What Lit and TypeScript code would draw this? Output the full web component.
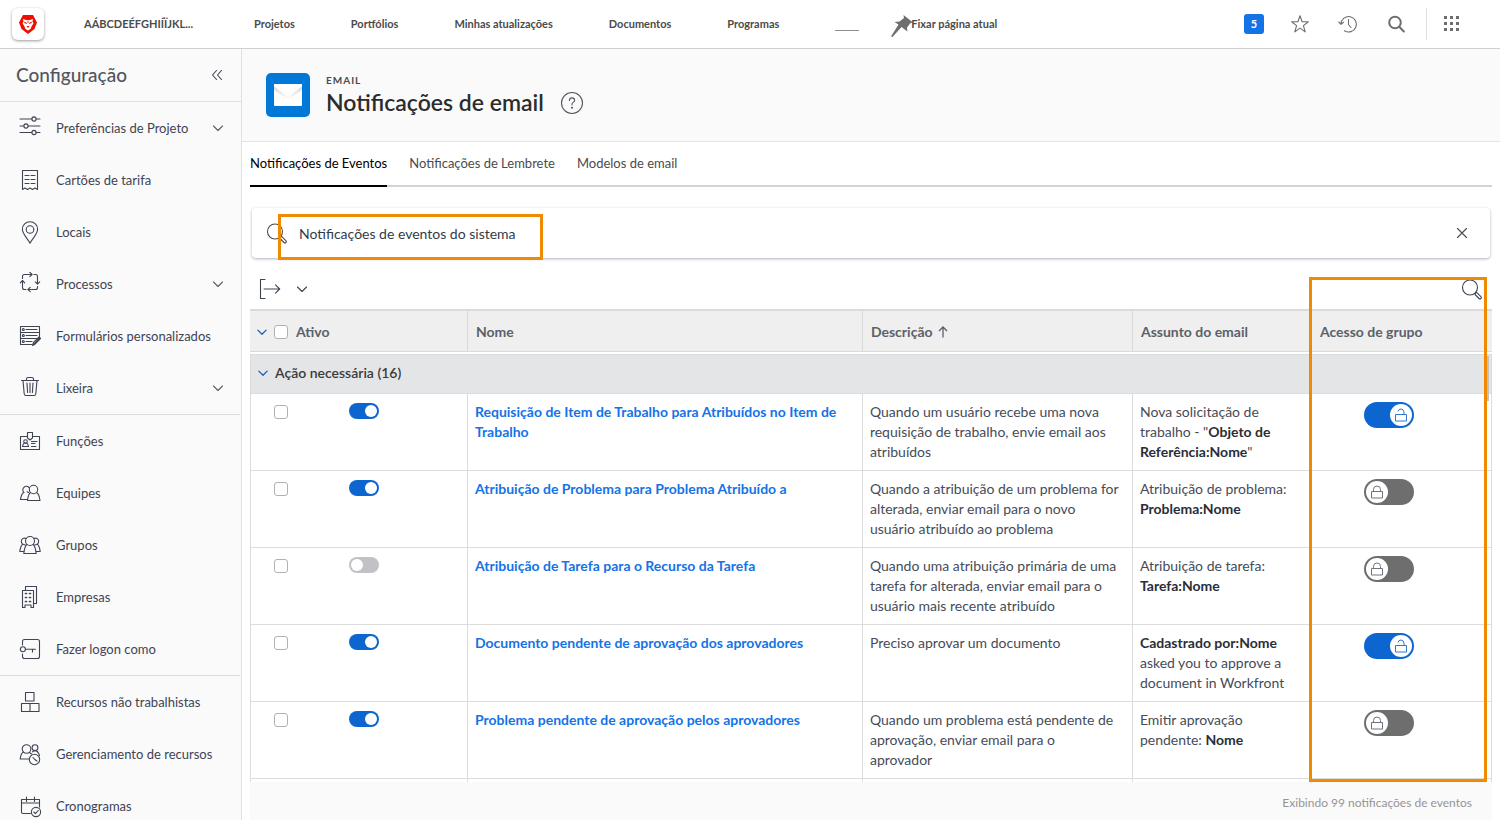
import { LitElement, html, svg, css, nothing } from "lit";
import type { TemplateResult } from "lit";
import { customElement, state } from "lit/decorators.js";
import { classMap } from "lit/directives/class-map.js";

/* Line icons, drawn on a 24 unit square. */
const glyphs: Record<string, TemplateResult> = {
  sliders: svg`<path d="M2 3h11.8M18.2 3H22M2 10h3.8M10.2 10H22M2 16.5h11.8M18.2 16.5H22"/>
    <circle cx="16" cy="3" r="2.1"/><circle cx="8" cy="10" r="2.1"/><circle cx="16" cy="16.5" r="2.1"/>`,
  receipt: svg`<path d="M4.5 21.5v-19h15v19l-2.5-1.5-2.5 1.5-2.5-1.5-2.5 1.5L7 20zM7 7.5h4M13 7.5h4M7 11.5h4M13 11.5h4M7 15.5h4M13 15.5h4"/>`,
  pin: svg`<path d="M12 23.2C9.5 18.5 4.4 14 4.4 9.3a7.6 7.6 0 0 1 15.2 0C19.6 14 14.5 18.5 12 23.2z"/><circle cx="12" cy="9.5" r="3.8"/>`,
  cycle: svg`<path d="M4.5 6.5v-2q0-2 2-2h7.5M11.8.3l2.3 2.2-2.3 2.2M16 2.500h1.500q2 0 2 2v7.500M17.300 9.800l2.200 2.300 2.200-2.300M19.500 14.500v1q0 2-2 2H10M12.200 15.300l-2.300 2.200 2.300 2.200M8 17.500H6.500q-2 0-2-2V8.500M2.300 10.800l2.200-2.300 2.200 2.300"/>`,
  form: svg`<path d="M14 20.5H2.500v-18h19v12M2.500 8.500h19M2.500 14.500h16M8 5.500h11M8 11.500h11M8 17.500h6"/>
    <circle cx="5.300" cy="5.500" r="1"/><circle cx="5.300" cy="11.500" r="1"/><circle cx="5.300" cy="17.500" r="1"/>
    <path d="M14.500 21.500l1-3 5.500-5.500 1.500 1.500-5.500 5.700zM16 20l5.500-6"/>`,
  trash: svg`<path d="M3.500 4.500h17M8.500 4.500v-1.500q0-1.500 1.500-1.500h4q1.500 0 1.500 1.500v1.500M5 4.500l1.200 13.300q.200 1.700 1.700 1.700h8.200q1.500 0 1.700-1.700L19 4.500M9 7l.600 9.500M12 7v9.500M15 7l-.600 9.500"/>`,
  badge: svg`<path d="M9.500 7.500h-7v13h19v-13h-7M9.500 3.500h5v5.500l-2.500 2-2.500-2zM13.500 12.500h5.500M13.500 14.500h3.500M13.500 17.500h4.500"/>
    <circle cx="7.500" cy="12.500" r="1.800"/><path d="M4.500 17.500q.500-3 2-3.500h2q1.500.500 2 3.500z"/>`,
  team: svg`<circle cx="15.500" cy="8.500" r="4.200"/><path d="M12.500 11.500c-1.500 1-2.500 4-3 8h12.500c-.500-4-1.500-7-3.500-8M9.700 18.500H2.500c.500-3.500 1.300-6 3.300-7"/>
    <path d="M10.500 11.500q-1-.500-1.500-.700M5.800 11.500A3.200 3.200 0 1 1 11 6.500"/>`,
  group: svg`<circle cx="12" cy="8" r="4.500"/><path d="M9 11.500c-1.500 1-2.800 5-3.200 9h12.400c-.400-4-1.700-8-3.200-9M6.300 18.500H1.800c.500-3.500 1.200-6.200 3-7.200M17.700 18.500h4.500c-.500-3.500-1.200-6.200-3-7.200"/>
    <path d="M8.200 5.500A3.300 3.300 0 1 0 5.500 11.500l2 .500M15.800 5.500a3.300 3.300 0 1 1 2.700 6l-2 .500"/>`,
  building: svg`<path d="M4.500 22.500v-17h11v17h-2.500v-2.500H7v2.500zM7.500 5.300V1.500h11v17h-3"/>
    <path d="M7.500 8.500h1M11.500 8.500h1M7.500 12.500h1M11.500 12.500h1M7.500 16.500h1M11.500 16.500h1" stroke-width="1.700"/>`,
  key: svg`<path d="M4.500 8V4.500q0-2 2-2h13q2 0 2 2v15q0 2-2 2h-13q-2 0-2-2V17M7.500 12.300h10M14.500 12.500v2.500"/><circle cx="4.900" cy="12.300" r="2.500"/>`,
  blocks: svg`<path d="M7.500 2.500h8.500v8.500H7.500zM3.500 13.500h17.500v8H3.500zM12 13.500v8"/>`,
  teamClock: svg`<circle cx="8.500" cy="7" r="4.300"/><path d="M5.500 10c-2 1-3 4-3.300 7h9M11.500 10.500l2 1.500"/>
    <circle cx="17" cy="5.700" r="2.900"/><path d="M14.500 9.800q1-1.200 2.500-1.200 3 0 4.500 5"/>
    <circle cx="16.500" cy="17.500" r="5.200"/><path d="M15 15.500l1.800 2 2.200 1.500"/>`,
  calendar: svg`<path d="M12.500 19.500H5q-1.500 0-1.500-1.500V5.500h18V13M3.500 9h18M8.500 3v4.500M16.500 3v4.500"/>
    <circle cx="18" cy="18" r="4.600"/><path d="M15.800 18l1.600 1.700 2.900-3.200"/>`,
  chevron: svg`<path d="M7.500 10l4.500 4.500 4.500-4.500"/>`,
  collapse: svg`<path d="M11.500 7.500L7.500 12l4 4.500M16.500 7.500L12.500 12l4 4.500"/>`,
  cross: svg`<path d="M7.500 7.500l9 9M16.500 7.500l-9 9"/>`,
  lens: svg`<circle cx="11" cy="10.500" r="7.500"/><path d="M16.400 15.800l1.400-.200 4.100 4a1.200 1.200 0 0 1-1.900 1.900l-4-4z"/>`,
  exportTo: svg`<path d="M7 2.500H2.500v19H7M6 12h15.500M17.500 7.800l4.200 4.200-4.200 4.200"/>`,
  help: svg`<circle cx="12" cy="12" r="10.500"/><path d="M9.400 9.500q.100-2.600 2.600-2.600t2.600 2.300q0 1.300-1.400 2.200T12 13.900"/><circle cx="12" cy="16.700" r=".500"/>`,
  star: svg`<path d="M12 3.800l2.100 5.900h6.200l-4.900 3.900 1.800 6.300L12 16.100 6.800 19.900l1.800-6.300-4.900-3.900h6.200z"/>`,
  history: svg`<path d="M5 12A7.700 7.700 0 1 1 8.500 18.700M2.800 10L5 12.300l2.500-2M12.500 7.500v5l2.500 3"/>`,
  search: svg`<g stroke-width="2"><circle cx="11" cy="10.500" r="5.800"/><path d="M15.300 14.800l4.500 4.700"/></g>`,
};

const icon = (name: string, extra = "") =>
  html`<svg class="icon ${extra}" viewBox="0 0 24 24" aria-hidden="true">${glyphs[name]}</svg>`;

const lock = (open: boolean) => html`
  <svg class="lock" viewBox="0 0 14 14" aria-hidden="true">
    <path d="M1.500 6.500h11v6.500h-11z" />
    <path d=${open ? "M4 3.500Q4.500 1 7 1t3 3v2.500" : "M3.500 6.500V4.500Q3.500 1 7 1t3.500 3.500v2"} />
  </svg>`;

interface MenuItem { label: string; glyph: string; opens?: boolean }

const menu: MenuItem[][] = [
  [
    { label: "Preferências de Projeto", glyph: "sliders", opens: true },
    { label: "Cartões de tarifa", glyph: "receipt" },
    { label: "Locais", glyph: "pin" },
    { label: "Processos", glyph: "cycle", opens: true },
    { label: "Formulários personalizados", glyph: "form" },
    { label: "Lixeira", glyph: "trash", opens: true },
  ],
  [
    { label: "Funções", glyph: "badge" },
    { label: "Equipes", glyph: "team" },
    { label: "Grupos", glyph: "group" },
    { label: "Empresas", glyph: "building" },
    { label: "Fazer logon como", glyph: "key" },
  ],
  [
    { label: "Recursos não trabalhistas", glyph: "blocks" },
    { label: "Gerenciamento de recursos", glyph: "teamClock" },
    { label: "Cronogramas", glyph: "calendar" },
  ],
];

interface EventRow {
  name: string;
  about: string;
  subject: TemplateResult;
  active: boolean;
  unlocked: boolean;
}

const events: EventRow[] = [
  {
    name: "Requisição de Item de Trabalho para Atribuídos no Item de Trabalho",
    about: "Quando um usuário recebe uma nova requisição de trabalho, envie email aos atribuídos",
    subject: html`Nova solicitação de trabalho - "<b>Objeto de Referência:Nome</b>"`,
    active: true,
    unlocked: true,
  },
  {
    name: "Atribuição de Problema para Problema Atribuído a",
    about: "Quando a atribuição de um problema for alterada, enviar email para o novo usuário atribuído ao problema",
    subject: html`Atribuição de problema: <b>Problema:Nome</b>`,
    active: true,
    unlocked: false,
  },
  {
    name: "Atribuição de Tarefa para o Recurso da Tarefa",
    about: "Quando uma atribuição primária de uma tarefa for alterada, enviar email para o usuário mais recente atribuído",
    subject: html`Atribuição de tarefa: <b>Tarefa:Nome</b>`,
    active: false,
    unlocked: false,
  },
  {
    name: "Documento pendente de aprovação dos aprovadores",
    about: "Preciso aprovar um documento",
    subject: html`<b>Cadastrado por:Nome</b> asked you to approve a document in Workfront`,
    active: true,
    unlocked: true,
  },
  {
    name: "Problema pendente de aprovação pelos aprovadores",
    about: "Quando um problema está pendente de aprovação, enviar email para o aprovador",
    subject: html`Emitir aprovação pendente: <b>Nome</b>`,
    active: true,
    unlocked: false,
  },
];

@customElement("app-root")
export class AppRoot extends LitElement {
  @state() private tab = 0;

  static styles = css`
    :host {
      display: flex;
      flex-direction: column;
      height: 100vh;
      overflow: hidden;
      background: #fff;
      color: #4b4b4b;
      font-family: Lato, "Open Sans", sans-serif;
      font-size: 14px;
      line-height: 20px;
    }
    * { box-sizing: border-box; }
    a { color: inherit; text-decoration: none; }
    h1, h2 { margin: 0; }
    button {
      display: inline-flex;
      align-items: center;
      justify-content: center;
      flex: none;
      padding: 0;
      border: 0;
      background: none;
      color: inherit;
      font: inherit;
      cursor: pointer;
    }
    .icon {
      display: block;
      flex: none;
      width: 24px;
      height: 24px;
      fill: none;
      stroke: currentColor;
      stroke-width: 1.1;
      stroke-linecap: round;
      stroke-linejoin: round;
    }

    .topbar {
      display: flex;
      align-items: center;
      flex: none;
      height: 49px;
      padding: 0 36px 0 12px;
      border-bottom: 1px solid #d0d0d0;
    }
    .logo {
      display: grid;
      place-items: center;
      width: 32px;
      height: 32px;
      margin-right: 40px;
      border-radius: 6px;
      background: #fff;
      box-shadow: 0 1px 3px rgba(0, 0, 0, 0.4);
    }
    .logo svg { width: 18px; height: 20px; }
    .links {
      display: flex;
      align-items: center;
      gap: 56px;
      font-size: 11px;
      font-weight: 700;
      white-space: nowrap;
    }
    .workspace { width: 114px; }
    .rule { width: 24px; height: 1px; margin-top: 12px; background: #8e8e8e; }
    .fix {
      margin-left: 32px;
      font-size: 11px;
      font-weight: 700;
      white-space: nowrap;
    }
    .fix svg { width: 22px; height: 22px; margin: 4px -2px 0 0; }
    .tools {
      display: flex;
      align-items: center;
      gap: 24px;
      margin-left: auto;
      color: #6e6e6e;
    }
    .count {
      width: 20px;
      height: 20px;
      border-radius: 3px;
      background: #1473e6;
      color: #fff;
      font-size: 11px;
      font-weight: 700;
    }
    .apps {
      height: 32px;
      margin-left: -6px;
      padding-left: 13px;
      border-left: 1px solid #e1e1e1;
    }
    .apps svg { width: 24px; height: 24px; fill: #6e6e6e; }

    .body { display: flex; flex: 1; min-height: 0; }
    .sidebar {
      flex: none;
      width: 242px;
      overflow: hidden;
      border-right: 1px solid #e1e1e1;
      background: #fafafa;
      color: #3f4453;
    }
    .sidebar header {
      display: flex;
      align-items: center;
      justify-content: space-between;
      height: 53px;
      padding: 0 12px 0 16px;
      border-bottom: 1px solid #e1e1e1;
    }
    .sidebar h2 {
      color: #53565f;
      font-size: 19px;
      font-weight: 500;
      line-height: 24px;
    }
    .menu {
      margin: 0 1px 0 0;
      padding: 0;
      list-style: none;
      font-size: 13px;
    }
    .menu + .menu { border-top: 1px solid #dcdcdc; }
    .menu a {
      display: flex;
      align-items: center;
      gap: 14px;
      height: 52px;
      padding: 0 10px 0 18px;
      white-space: nowrap;
    }
    .menu .more { margin-left: auto; color: #5b616b; }

    main { display: flex; flex-direction: column; flex: 1; min-width: 0; }
    .title {
      display: flex;
      align-items: center;
      gap: 16px;
      flex: none;
      height: 93px;
      padding: 0 24px;
      border-bottom: 1px solid #e4e4e4;
      background: #fafafa;
    }
    .mail { width: 44px; height: 44px; }
    .kicker {
      font-size: 10px;
      font-weight: 700;
      line-height: 14px;
      letter-spacing: 1px;
    }
    .title h1 {
      color: #2c2c2c;
      font-size: 23px;
      font-weight: 600;
      line-height: 30px;
    }
    .title button { align-self: flex-end; margin-bottom: 26px; color: #53565f; }

    .content {
      display: flex;
      flex-direction: column;
      flex: 1;
      min-height: 0;
      padding: 0 8px;
    }
    .tabs {
      display: flex;
      gap: 22px;
      flex: none;
      height: 45px;
      box-shadow: inset 0 -2px #d3d3d3;
      font-size: 13px;
    }
    .tabs button { padding-bottom: 2px; border-bottom: 2px solid transparent; }
    .tabs .current { border-color: #000; color: #000; }

    .finder {
      position: relative;
      display: flex;
      align-items: center;
      gap: 8px;
      flex: none;
      height: 50px;
      margin: 21px 2px 0;
      padding: 0 16px 0 12px;
      border-radius: 4px;
      box-shadow: 0 1px 3px rgba(50, 60, 90, 0.4);
      color: #4b4b4b;
    }
    .finder input {
      flex: 1;
      min-width: 0;
      padding: 2px 0 0 3px;
      border: 0;
      outline: 0;
      background: none;
      color: #323c48;
      font: inherit;
    }
    .mark {
      position: absolute;
      border: 3px solid #ef8b00;
      pointer-events: none;
    }
    .mark.search { top: 6px; left: 26px; width: 265px; height: 46px; }
    .mark.access { top: 19px; right: 5px; bottom: 0; width: 178px; }

    .results {
      position: relative;
      display: flex;
      flex-direction: column;
      flex: 1;
      min-height: 0;
    }
    .toolbar {
      display: flex;
      align-items: center;
      gap: 8px;
      flex: none;
      height: 51px;
      padding: 10px 9px 0 8px;
      color: #3f4453;
    }
    .toolbar .right { margin-left: auto; }
    .scroller { position: relative; flex: 1; min-height: 0; overflow: hidden; }
    .thumb {
      position: absolute;
      top: 47px;
      right: 3px;
      width: 2px;
      height: 45px;
      background: #c1c1c1;
    }

    table {
      width: 100%;
      border-spacing: 0;
      table-layout: fixed;
      color: #464b58;
    }
    .c1 { width: 17.47%; }
    .c2 { width: 31.8%; }
    .c3 { width: 21.74%; }
    .c4 { width: 14.41%; }
    th { text-align: left; font-weight: 700; }
    thead th {
      height: 43px;
      padding: 1px 8px 0;
      border-top: 2px solid #dadada;
      border-bottom: 1px solid #dadada;
      border-left: 1px solid #dadada;
      background: #efefef;
      color: #5b616b;
    }
    thead th:first-child { padding-left: 0; border-left: 0; }
    .order { width: 10px; height: 12px; margin: 0 0 -1px 2px; fill: none; stroke: currentColor; stroke-width: 1.3; }
    .pick { display: flex; align-items: center; gap: 8px; }
    .pick button { width: 24px; margin-right: -8px; color: #1b5fb4; }
    .pick button .icon { width: 22px; height: 22px; stroke-width: 1.4; }
    .spacer td { height: 2px; padding: 0; }
    .section th {
      height: 40px;
      padding: 0 0 3px;
      border: 1px solid #dcdcdc;
      background: #e4e5e7;
      color: #3a3a3a;
      font-weight: 600;
    }
    td {
      height: 77px;
      padding: 8px 12px 8px 7px;
      border-bottom: 1px solid #dcdcdc;
      border-left: 1px solid #dcdcdc;
      vertical-align: top;
    }
    .spacer td { border: 0; }
    .event td:last-child { padding-left: 52px; border-right: 1px solid #dcdcdc; }
    .event td:first-child { padding-left: 23px; }
    td a { color: #1473e6; font-weight: 700; }
    td b { color: #2a2e38; }
    .state { display: flex; align-items: flex-start; gap: 61px; padding-top: 1px; }

    .tick {
      appearance: none;
      flex: none;
      width: 14px;
      height: 14px;
      margin: 0;
      border: 1px solid #b1b1b1;
      border-radius: 3px;
      background: #fff;
    }
    .state .tick { margin-top: 2px; }
    .switch {
      appearance: none;
      display: flex;
      flex: none;
      width: 30px;
      height: 16px;
      margin: 0;
      padding: 2px;
      border-radius: 8px;
      background: #c1c1c6;
    }
    .switch::before {
      content: "";
      width: 12px;
      height: 12px;
      border-radius: 50%;
      background: #fff;
    }
    .switch:checked { justify-content: flex-end; background: #0d66d0; }
    .access-switch { display: inline-grid; width: 50px; vertical-align: top; }
    .access-switch > * { grid-area: 1 / 1; align-self: center; }
    .access-switch .switch {
      width: 50px;
      height: 26px;
      border-radius: 13px;
      background: #6e6e6e;
    }
    .access-switch .switch::before { width: 22px; height: 22px; }
    .access-switch .switch:checked { background: #0d66d0; }
    .lock {
      width: 14px;
      height: 14px;
      margin-left: 6px;
      fill: none;
      stroke: #6e7480;
      pointer-events: none;
    }
    .unlocked .lock { margin-left: 30px; stroke: #2f78d0; }

    .sum {
      flex: none;
      height: 38px;
      padding: 11px 20px 0 0;
      background: #fafafa;
      color: #959595;
      font-size: 12px;
      text-align: right;
    }
  `;

  private topbar() {
    return html`
      <header class="topbar">
        <a class="logo" href="#" aria-label="Início">
          <svg viewBox="0 0 18 20" aria-hidden="true">
            <path fill="#eb1000" d="M4 1h10l4 7.500-2.500 6.500L9 20l-6.500-5L0 8.500z" />
            <path fill="#fff" d="M4 5l3 1h4l3-1-.500 2.500 1 2-1.500 2-1.500 3.500L9 16.500 6.500 15 5 11.500l-1.500-2 1-2z" />
            <path fill="#eb1000" d="M5 7.500l3 1.500-.500 1L5.500 9zM13 7.500L10 9l.500 1 2-1zM7.500 12h3L9 14zM8.600 6.500h.8V9h-.8z" />
          </svg>
        </a>
        <nav class="links">
          <a class="workspace" href="#">AÁBCDEÉFGHIÍÏJKL...</a>
          <a href="#">Projetos</a>
          <a href="#">Portfólios</a>
          <a href="#">Minhas atualizações</a>
          <a href="#">Documentos</a>
          <a href="#">Programas</a>
          <span class="rule"></span>
        </nav>
        <button class="fix">
          <svg viewBox="0 0 22 22" aria-hidden="true">
            <path fill="#6e6e6e" d="M12.500 0L22 7.500l-2.500.500-3.500 4.500.300 4L10.500 12 1.500 22 0 21.500l7.500-12L3.500 7l5-.500L13 3z" />
          </svg>Fixar página atual
        </button>
        <div class="tools">
          <button class="count" aria-label="5 notificações">5</button>
          <button aria-label="Favoritos">${icon("star")}</button>
          <button aria-label="Recentes">${icon("history")}</button>
          <button aria-label="Pesquisar">${icon("search")}</button>
          <button class="apps" aria-label="Aplicativos">
            <svg viewBox="0 0 24 24" aria-hidden="true">
              ${[4, 10, 16].map((y) => [4, 10, 16].map((x) => svg`<rect x=${x} y=${y} width="3" height="3" />`))}
            </svg>
          </button>
        </div>
      </header>`;
  }

  private sidebar() {
    return html`
      <aside class="sidebar">
        <header>
          <h2>Configuração</h2>
          <button aria-label="Recolher">${icon("collapse")}</button>
        </header>
        <nav>
          ${menu.map((part) => html`
            <ul class="menu">
              ${part.map((item) => html`
                <li><a href="#">${icon(item.glyph)}<span>${item.label}</span>${item.opens ? icon("chevron", "more") : nothing}</a></li>`)}
            </ul>`)}
        </nav>
      </aside>`;
  }

  private eventRow(row: EventRow) {
    return html`
      <tr class="event">
        <td>
          <div class="state">
            <input class="tick" type="checkbox" aria-label="Selecionar ${row.name}" />
            <input class="switch" type="checkbox" role="switch" aria-label="Ativar ${row.name}" .checked=${row.active} />
          </div>
        </td>
        <td><a href="#">${row.name}</a></td>
        <td>${row.about}</td>
        <td>${row.subject}</td>
        <td>
          <label class=${classMap({ "access-switch": true, unlocked: row.unlocked })}>
            <input class="switch" type="checkbox" role="switch" aria-label="Acesso de grupo" .checked=${row.unlocked} />
            ${lock(row.unlocked)}
          </label>
        </td>
      </tr>`;
  }

  private table() {
    return html`
      <table>
        <colgroup><col class="c1" /><col class="c2" /><col class="c3" /><col class="c4" /><col /></colgroup>
        <thead>
          <tr>
            <th>
              <div class="pick">
                <button aria-label="Recolher todos">${icon("chevron")}</button>
                <input class="tick" id="all" type="checkbox" />
                <label for="all">Ativo</label>
              </div>
            </th>
            <th>Nome</th>
            <th aria-sort="ascending">
              Descrição
              <svg class="order" viewBox="0 0 10 12" aria-hidden="true"><path d="M5 11.500V1M1 5l4-4 4 4" /></svg>
            </th>
            <th>Assunto do email</th>
            <th>Acesso de grupo</th>
          </tr>
        </thead>
        <tbody>
          <tr class="spacer"><td colspan="5"></td></tr>
          <tr class="section">
            <th colspan="5">
              <div class="pick"><button aria-label="Recolher grupo">${icon("chevron")}</button>Ação necessária (16)</div>
            </th>
          </tr>
          ${events.map((row) => this.eventRow(row))}
          <tr class="event"><td></td><td></td><td></td><td></td><td></td></tr>
        </tbody>
      </table>`;
  }

  render() {
    const tabs = ["Notificações de Eventos", "Notificações de Lembrete", "Modelos de email"];
    return html`
      ${this.topbar()}
      <div class="body">
        ${this.sidebar()}
        <main>
          <header class="title">
            <svg class="mail" viewBox="0 0 44 44" aria-hidden="true">
              <defs>
                <linearGradient id="fold" x1="0" y1="0" x2="0" y2="1">
                  <stop offset="0" stop-color="#c8c8c8" /><stop offset="1" stop-color="#fff" />
                </linearGradient>
              </defs>
              <rect width="44" height="44" rx="5" fill="#0078d7" />
              <rect x="8" y="11" width="28" height="22" rx="1" fill="#fff" />
              <path d="M8 13l14 11 14-11v4L22 27 8 17z" fill="url(#fold)" opacity=".7" />
              <path d="M8 12q0-1 1-1h26q1 0 1 1v1L22 24 8 13z" fill="#fff" />
            </svg>
            <div>
              <div class="kicker">EMAIL</div>
              <h1>Notificações de email</h1>
            </div>
            <button aria-label="Ajuda">${icon("help")}</button>
          </header>
          <div class="content">
            <div class="tabs" role="tablist">
              ${tabs.map((name, i) => html`
                <button role="tab" aria-selected=${i === this.tab} class=${classMap({ current: i === this.tab })}
                  @click=${() => (this.tab = i)}>${name}</button>`)}
            </div>
            <div class="finder">
              ${icon("lens")}
              <input type="text" aria-label="Pesquisar notificações" value="Notificações de eventos do sistema" />
              <button aria-label="Limpar">${icon("cross")}</button>
              <span class="mark search"></span>
            </div>
            <div class="results">
              <div class="toolbar">
                <button aria-label="Exportar">${icon("exportTo")}</button>
                <button aria-label="Opções de exportação">${icon("chevron")}</button>
                <button class="right" aria-label="Pesquisar na lista">${icon("lens")}</button>
              </div>
              <div class="scroller">${this.table()}<span class="thumb"></span></div>
              <span class="mark access"></span>
            </div>
            <footer class="sum">Exibindo 99 notificações de eventos</footer>
          </div>
        </main>
      </div>`;
  }
}
